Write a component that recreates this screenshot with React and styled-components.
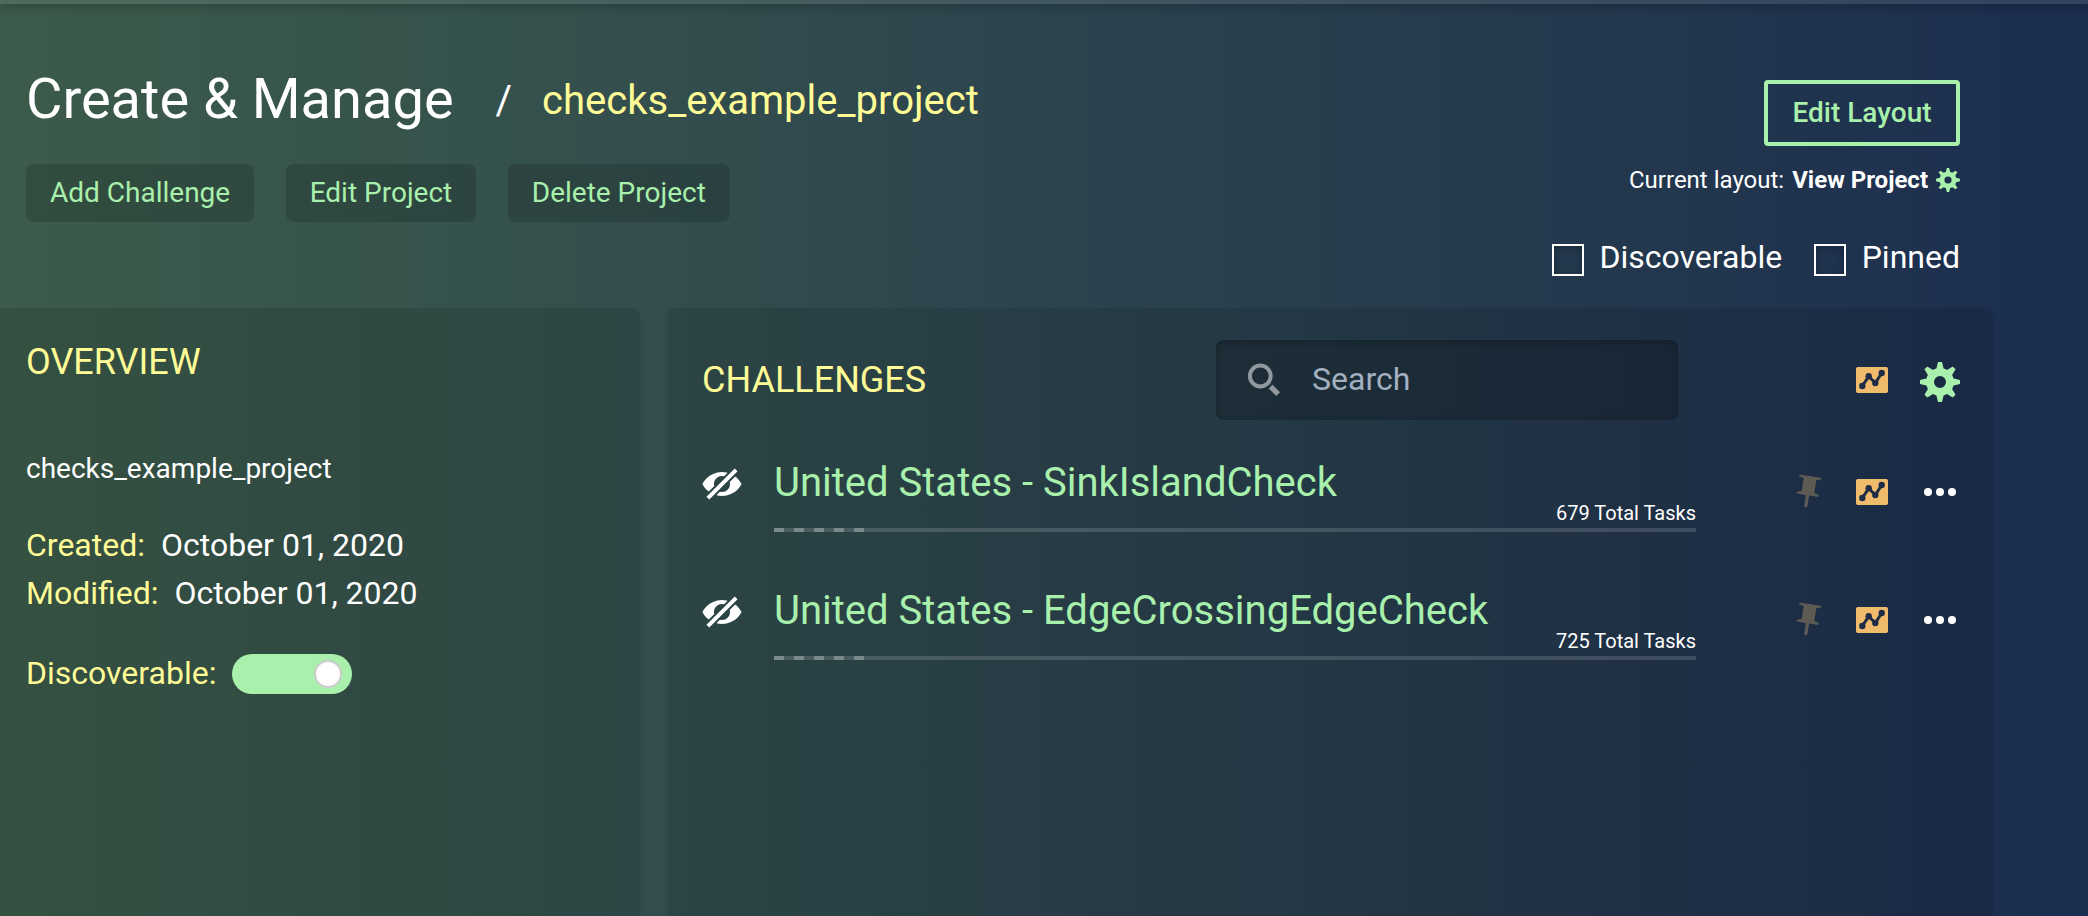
import React from "react";
import styled, { createGlobalStyle } from "styled-components";

const GREEN = "#a8f0ac";
const YELLOW = "#fffb96";
const ORANGE = "#f0bc6b";

const GlobalStyle = createGlobalStyle`
  * { box-sizing: border-box; }
  body {
    margin: 0;
    color: #fff;
    font-family: Roboto, "Liberation Sans", sans-serif;
    overflow: hidden;
  }
  h1, h2, h3, p, ul { margin: 0; padding: 0; font-weight: 400; }
  svg { display: block; flex: none; }
`;

const Page = styled.div`
  width: 2088px;
  height: 916px;
  overflow: hidden;
  display: flex;
  flex-direction: column;
  background: linear-gradient(90deg, #3c5b4a 0%, #334e4d 31%, #2c444e 50%, #253a4d 72%, #1c2e4f 98%);
`;

const NavEdge = styled.div`
  flex: none;
  height: 4px;
  background: rgba(255, 255, 255, 0.1);
  box-shadow: 0 2px 10px rgba(0, 0, 0, 0.4);
`;

const Header = styled.header`
  flex: none;
  height: 304px;
  padding: 59px 128px 0 26px;
  display: flex;
  justify-content: space-between;
`;

const Crumbs = styled.div`
  display: flex;
  height: 72px;
  line-height: 72px;
`;

const PageTitle = styled.h1`
  font-size: 56px;
`;

const Slash = styled.span`
  margin: 2px 0 -2px 42px;
  font-size: 40px;
`;

const ProjectLink = styled.span`
  margin: 2px 0 -2px 30px;
  font-size: 40px;
  color: ${YELLOW};
`;

const Actions = styled.div`
  display: flex;
  gap: 31.5px;
  margin-top: 29px;
`;

const ActionButton = styled.button`
  height: 58px;
  padding: 0 24px 2px;
  border: 0;
  border-radius: 8px;
  background: rgba(0, 0, 0, 0.15);
  color: ${GREEN};
  font: 400 28px Roboto, sans-serif;
`;

const HeaderRight = styled.div`
  display: flex;
  flex-direction: column;
  align-items: flex-end;
  padding-top: 17px;
`;

const EditLayoutButton = styled.button`
  width: 196px;
  height: 66px;
  padding: 0 0 2px;
  border: 4px solid ${GREEN};
  border-radius: 4px;
  background: transparent;
  color: ${GREEN};
  font: 500 28px Roboto, sans-serif;
`;

const LayoutLine = styled.div`
  display: flex;
  align-items: center;
  height: 32px;
  margin-top: 18px;
  font-size: 24px;
  line-height: 30px;

  strong { margin: 0 8px; font-weight: 700; }
`;

const Checks = styled.div`
  display: flex;
  gap: 32px;
  margin-top: 42px;
`;

const CheckLabel = styled.label`
  display: flex;
  align-items: flex-start;
  gap: 15.5px;
  font-size: 32px;
  line-height: 38px;
  height: 42px;
`;

const CheckBox = styled.span`
  width: 32px;
  height: 32px;
  margin-top: 6px;
  border: 2px solid #fff;
  box-shadow: inset 0 2px 8px rgba(0, 0, 0, 0.25);
`;

const Panels = styled.main`
  flex: 1;
  display: flex;
  gap: 28px;
`;

const Panel = styled.section`
  width: ${(p) => p.$width}px;
  border-radius: ${(p) => p.$radius};
  padding: ${(p) => p.$padding};
  background: rgba(0, 0, 0, 0.11);
  box-shadow: 0 6px 10px rgba(0, 0, 0, 0.08);
`;

const PanelTitle = styled.h2`
  font-size: 36px;
  line-height: 44px;
  text-transform: uppercase;
  color: ${YELLOW};
`;

const Description = styled.p`
  margin-top: 67px;
  font-size: 28px;
  line-height: 36px;
`;

const Facts = styled.div`
  margin-top: 34px;
  font-size: 32px;
  line-height: 48px;
`;

const Fact = styled.div`
  display: flex;
  align-items: center;
  height: 48px;
  margin-top: ${(p) => p.$gap || 0}px;
`;

const FactName = styled.span`
  margin-right: 16px;
  color: ${YELLOW};
`;

const Toggle = styled.span`
  width: 120px;
  height: 40px;
  margin-top: 2px;
  padding: 6px 10px;
  display: flex;
  justify-content: flex-end;
  border-radius: 20px;
  background: ${GREEN};
`;

const Knob = styled.span`
  width: 28px;
  height: 28px;
  border: 2px solid #ccc;
  border-radius: 50%;
  background: #fff;
`;

const ListHeader = styled.div`
  display: flex;
  align-items: center;
  height: 80px;
`;

const SearchBox = styled.div`
  display: flex;
  align-items: center;
  width: 462px;
  height: 80px;
  margin-left: auto;
  margin-right: 178px;
  padding: 0 31px;
  border-radius: 8px;
  background: rgba(0, 0, 0, 0.18);
  box-shadow: inset 0 2px 8px rgba(0, 0, 0, 0.25);
  color: #a3b0c0;
  font-size: 32px;

  span { margin-left: 31px; padding-bottom: 2px; }
`;

const HeaderGear = styled.span`
  margin: 4px 0 0 32px;
`;

const ChallengeRow = styled.article`
  display: flex;
  height: 128px;
`;

const Visibility = styled.div`
  width: 72px;
  padding-top: 44px;
`;

const ChallengeBody = styled.div`
  width: 922px;
  padding-top: 39px;
`;

const ChallengeName = styled.h3`
  height: 41px;
  font-size: 40px;
  line-height: 48px;
  white-space: nowrap;
  color: ${GREEN};
`;

const TaskCount = styled.div`
  height: 28px;
  font-size: 20px;
  line-height: 26px;
  text-align: right;
`;

const Progress = styled.div`
  height: 4px;
  background: rgba(255, 255, 255, 0.15);
`;

const ProgressDashes = styled.div`
  width: 90px;
  height: 4px;
  background: repeating-linear-gradient(90deg, rgba(255, 255, 255, 0.27) 0 10px, transparent 10px 20px);
`;

const RowTools = styled.div`
  display: flex;
  align-items: center;
  height: 40px;
  margin-top: 52px;
  margin-left: auto;
  gap: 32px;
`;

const Cog = ({ size }) => (
  <svg width={size} height={size} viewBox="0 0 20 20" fill={GREEN}>
    <path d="M3.94 6.5L2.22 3.64l1.42-1.42L6.5 3.94c.52-.3 1.1-.54 1.7-.7L9 0h2l.8 3.24c.6.16 1.18.4 1.7.7l2.86-1.72 1.42 1.42-1.72 2.86c.3.52.54 1.1.7 1.7L20 9v2l-3.24.8c-.16.6-.4 1.18-.7 1.7l1.72 2.86-1.42 1.42-2.86-1.72c-.52.3-1.1.54-1.7.7L11 20H9l-.8-3.24c-.6-.16-1.18-.4-1.7-.7l-2.86 1.72-1.42-1.42 1.72-2.86c-.3-.52-.54-1.1-.7-1.7L0 11V9l3.24-.8c.16-.6.4-1.18.7-1.7zM10 13a3 3 0 1 0 0-6 3 3 0 0 0 0 6z" />
  </svg>
);

const Magnifier = () => (
  <svg width="34" height="34" viewBox="0 0 34 34" fill="none" stroke="#90999e">
    <circle cx="13.3" cy="13" r="10.4" strokeWidth="4" />
    <path d="M23.6 23.6l7.6 7.6" strokeWidth="5.4" />
  </svg>
);

const HiddenEye = () => (
  <svg width="40" height="40" viewBox="0 0 20 20" fill="#fff">
    <path d="M12.81 4.36l-1.77 1.78a4 4 0 0 0-4.9 4.9l-2.76 2.75C2.06 12.79.96 11.49.2 10a11 11 0 0 1 12.6-5.64zm3.8 1.85c1.33 1 2.43 2.3 3.2 3.79a11 11 0 0 1-12.62 5.64l1.77-1.78a4 4 0 0 0 4.9-4.9l2.76-2.75zm-.25-3.99l1.42 1.42L3.64 17.78l-1.42-1.42L16.36 2.22z" />
  </svg>
);

const ChartCard = () => (
  <svg width="32" height="26" viewBox="0 0 32 26">
    <rect width="32" height="26" rx="2" fill={ORANGE} />
    <g fill="#1f2e48">
      <path d="M6.3 19L12.7 9.3L19.3 16L25.7 6" fill="none" stroke="#1f2e48" strokeWidth="3" />
      <circle cx="6.3" cy="19" r="3.2" />
      <circle cx="12.7" cy="9.3" r="3.2" />
      <circle cx="19.3" cy="16" r="3.2" />
      <circle cx="25.7" cy="6" r="3.2" />
    </g>
  </svg>
);

const Pin = () => (
  <svg width="32" height="40" viewBox="-10 -12.5 20 25" fill="#5e5b55">
    <path transform="rotate(9) translate(-10 -10)" d="M11 12h6v-1l-3-1V2l3-1V0H3v1l3 1v8l-3 1v1h6v7l1 1 1-1v-7z" />
  </svg>
);

const Dots = () => (
  <svg width="40" height="40" viewBox="0 0 40 40" fill="#fff">
    <circle cx="8" cy="20" r="4" />
    <circle cx="20" cy="20" r="4" />
    <circle cx="32" cy="20" r="4" />
  </svg>
);

const challenges = [
  { name: "United States - SinkIslandCheck", tasks: 679 },
  { name: "United States - EdgeCrossingEdgeCheck", tasks: 725 },
];

const Challenge = ({ name, tasks }) => (
  <ChallengeRow>
    <Visibility><HiddenEye /></Visibility>
    <ChallengeBody>
      <ChallengeName>{name}</ChallengeName>
      <TaskCount>{tasks} Total Tasks</TaskCount>
      <Progress><ProgressDashes /></Progress>
    </ChallengeBody>
    <RowTools>
      <Pin />
      <ChartCard />
      <Dots />
    </RowTools>
  </ChallengeRow>
);

export default function App() {
  return (
    <>
      <GlobalStyle />
      <Page>
        <NavEdge />
        <Header>
          <div>
            <Crumbs>
              <PageTitle>Create &amp; Manage</PageTitle>
              <Slash>/</Slash>
              <ProjectLink>checks_example_project</ProjectLink>
            </Crumbs>
            <Actions>
              <ActionButton>Add Challenge</ActionButton>
              <ActionButton>Edit Project</ActionButton>
              <ActionButton>Delete Project</ActionButton>
            </Actions>
          </div>
          <HeaderRight>
            <EditLayoutButton>Edit Layout</EditLayoutButton>
            <LayoutLine>
              Current layout: <strong>View Project</strong>
              <Cog size={24} />
            </LayoutLine>
            <Checks>
              <CheckLabel><CheckBox />Discoverable</CheckLabel>
              <CheckLabel><CheckBox />Pinned</CheckLabel>
            </Checks>
          </HeaderRight>
        </Header>
        <Panels>
          <Panel $width={640} $radius="0 8px 0 0" $padding="32px 26px 0">
            <PanelTitle>Overview</PanelTitle>
            <Description>checks_example_project</Description>
            <Facts>
              <Fact><FactName>Created:</FactName>October 01, 2020</Fact>
              <Fact><FactName>Modified:</FactName>October 01, 2020</Fact>
              <Fact $gap={32}><FactName>Discoverable:</FactName><Toggle><Knob /></Toggle></Fact>
            </Facts>
          </Panel>
          <Panel $width={1325} $radius="8px 8px 0 0" $padding="32px 33px 0 34px">
            <ListHeader>
              <PanelTitle>Challenges</PanelTitle>
              <SearchBox><Magnifier /><span>Search</span></SearchBox>
              <ChartCard />
              <HeaderGear><Cog size={40} /></HeaderGear>
            </ListHeader>
            {challenges.map((c) => <Challenge key={c.name} {...c} />)}
          </Panel>
        </Panels>
      </Page>
    </>
  );
}
